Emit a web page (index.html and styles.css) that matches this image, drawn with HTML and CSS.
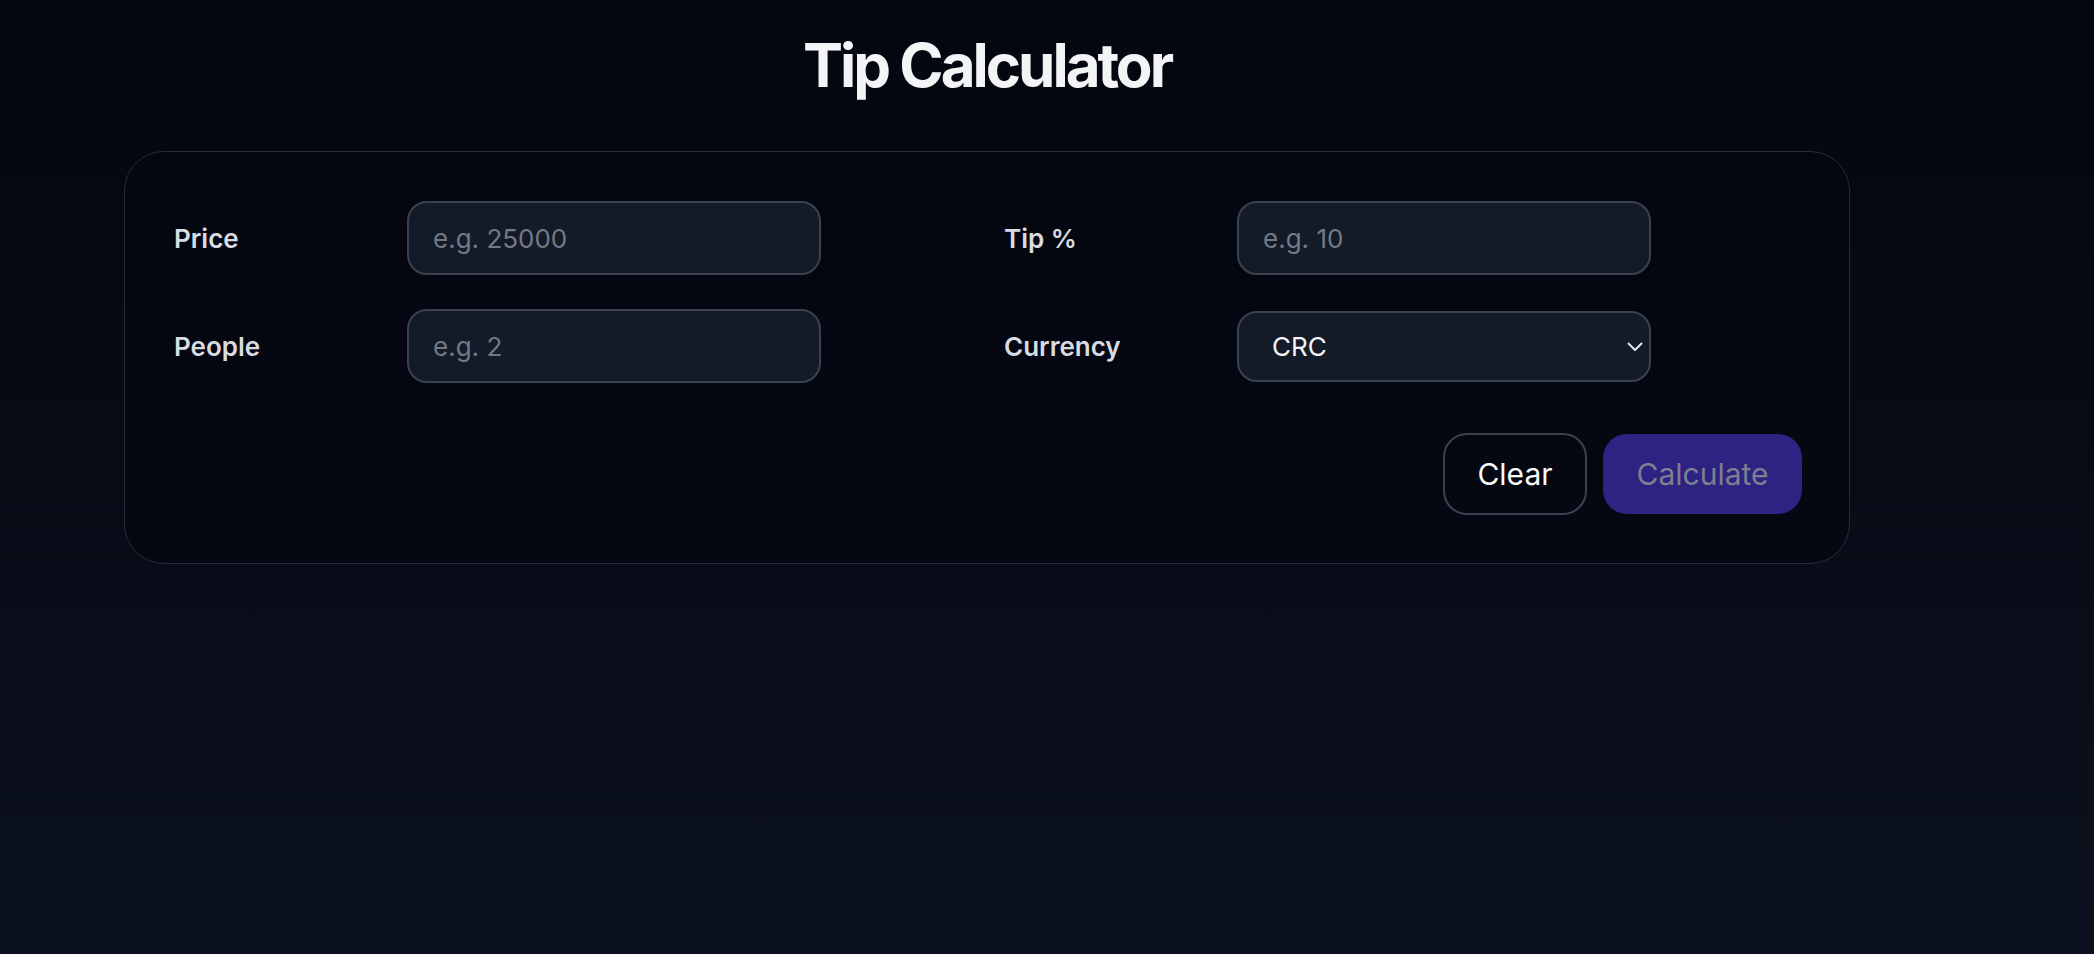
FILE: index.html
```html
<!DOCTYPE html>
<html lang="en">
<head>
<meta charset="utf-8">
<title>Tip Calculator</title>
<link rel="stylesheet" href="styles.css">
</head>
<body>
<main class="page">
  <h1 class="title">Tip Calculator</h1>
  <section class="card">
    <div class="fields">
      <label class="field">
        <span class="label">Price</span>
        <input class="control" type="text" placeholder="e.g. 25000">
      </label>
      <label class="field">
        <span class="label">Tip %</span>
        <input class="control" type="text" placeholder="e.g. 10">
      </label>
      <label class="field">
        <span class="label">People</span>
        <input class="control" type="text" placeholder="e.g. 2">
      </label>
      <label class="field">
        <span class="label">Currency</span>
        <span class="select-wrap">
          <select class="control select">
            <option>CRC</option>
            <option>USD</option>
            <option>EUR</option>
          </select>
          <svg class="chevron" width="16" height="10" viewBox="0 0 16 10" aria-hidden="true">
            <path d="M1.5 1.5 L8 8 L14.5 1.5" fill="none" stroke="#e5e7eb" stroke-width="2" stroke-linecap="round" stroke-linejoin="round"/>
          </svg>
        </span>
      </label>
    </div>
    <div class="actions">
      <button class="btn btn-clear" type="button">Clear</button>
      <button class="btn btn-calc" type="button" disabled>Calculate</button>
    </div>
  </section>
</main>
</body>
</html>
```

FILE: styles.css
```css
* {
  box-sizing: border-box;
}

html, body {
  height: 100%;
}

body {
  margin: 0;
  min-height: 954px;
  background: linear-gradient(to bottom, #04060f 0%, #0b111e 100%);
  font-family: Inter, "Noto Sans", "Liberation Sans", sans-serif;
  color: #f3f4f6;
}

.page {
  width: 1726px;
  margin-left: 124px;
  padding-top: 29px;
}

.title {
  margin: 0 0 50px;
  text-align: center;
  font-size: 60px;
  line-height: 72px;
  font-weight: 700;
  letter-spacing: -0.05em;
  color: #f3f4f6;
}

.card {
  border: 1.5px solid #252d39;
  border-radius: 40px;
  background: rgba(3, 6, 14, 0.55);
  padding: 49px 47px 48px 49px;
}

.fields {
  display: grid;
  grid-template-columns: 647px 647px;
  column-gap: 183px;
  row-gap: 34px;
  align-items: center;
}

.field {
  display: grid;
  grid-template-columns: 233px 414px;
  align-items: center;
}

.label {
  font-size: 26px;
  font-weight: 600;
  color: #d8dce2;
}

.control {
  width: 414px;
  height: 74px;
  border: 2px solid #3a4250;
  border-radius: 20px;
  background: #131a28;
  color: #f3f4f6;
  font-family: Inter, "Noto Sans", "Liberation Sans", sans-serif;
  font-size: 26px;
  padding: 0 24px;
  outline: none;
}

.control::placeholder {
  color: #737985;
}

.select-wrap {
  position: relative;
  display: block;
  width: 414px;
}

.select {
  appearance: none;
  -webkit-appearance: none;
  height: 71px;
  padding-left: 33px;
  display: block;
}

.chevron {
  position: absolute;
  right: 8px;
  top: 31px;
  pointer-events: none;
}

.actions {
  display: flex;
  justify-content: flex-end;
  align-items: center;
  gap: 16px;
  margin-top: 50px;
}

.btn {
  font-family: Inter, "Noto Sans", "Liberation Sans", sans-serif;
  font-size: 30px;
  font-weight: 400;
  border-radius: 24px;
  cursor: pointer;
}

.btn-clear {
  width: 144px;
  height: 82px;
  border: 2px solid #3a4252;
  background: transparent;
  color: #f9fafb;
}

.btn-calc {
  width: 199px;
  height: 80px;
  border: none;
  background: #2c2382;
  color: #7f7f8e;
}
```
